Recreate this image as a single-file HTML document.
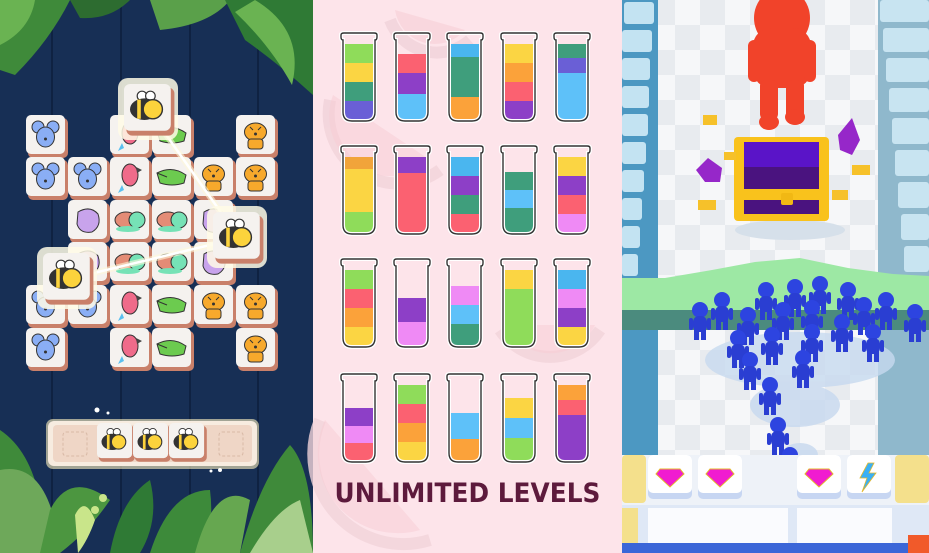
<!DOCTYPE html>
<html><head><meta charset="utf-8"><style>
html,body{margin:0;padding:0;width:929px;height:553px;overflow:hidden;background:#fff}
svg{position:absolute;top:0;left:0}
.txt{position:absolute;left:313px;width:309px;top:478px;text-align:center;font-family:"DejaVu Sans","Liberation Sans",sans-serif;font-weight:bold;font-size:27px;color:#5d1a3c;letter-spacing:0px;transform:scaleX(0.92)}
</style></head><body>
<svg width="929" height="553" viewBox="0 0 929 553">
<defs>
<clipPath id="c"><path d="M3,8 L35,8 L35,80 Q35,89 26,89 L12,89 Q3,89 3,80 Z"/></clipPath>
<path id="o" d="M3,8 Q1,8 1,5 L1,3 Q1,1 4,1 L34,1 Q37,1 37,3 L37,5 Q37,8 35,8 L35,80 Q35,89 26,89 L12,89 Q3,89 3,80 Z"/>
<g id="tile"><rect x="2" y="3" width="40" height="40" rx="5" fill="#c9806a"/><rect x="0" y="0" width="39" height="39" rx="5" fill="#f5f2ef"/></g>
<g id="mouse"><circle cx="12" cy="12" r="6" fill="#8aaef5" stroke="#333" stroke-width="1"/><circle cx="27" cy="12" r="6" fill="#8aaef5" stroke="#333" stroke-width="1"/><ellipse cx="19.5" cy="22" rx="9" ry="10" fill="#8aaef5" stroke="#333" stroke-width="1"/><circle cx="19.5" cy="24" r="1.5" fill="#333"/></g>
<g id="tiger"><ellipse cx="19.5" cy="17" rx="11" ry="9" fill="#f7a92c" stroke="#333" stroke-width="1"/><rect x="12" y="24" width="15" height="10" rx="3" fill="#f7a92c" stroke="#333" stroke-width="1"/><path d="M14,12 l3,3 M25,12 l-3,3" stroke="#333"/><circle cx="19.5" cy="19" r="1.5" fill="#333"/></g>
<g id="parrot"><ellipse cx="20" cy="18" rx="8" ry="11" fill="#ef6b8a" stroke="#333" stroke-width="1"/><path d="M26,10 l6,3 l-5,3z" fill="#444"/><path d="M12,28 l-4,8 l6,-3z" fill="#5ac0f0"/></g>
<g id="croc"><path d="M5,16 Q20,8 34,18 L32,26 Q20,30 8,26 Z" fill="#6ccb4f" stroke="#333" stroke-width="1"/><path d="M5,16 l10,4" stroke="#333"/></g>
<g id="turtle"><ellipse cx="16" cy="20" rx="11" ry="8" fill="#e48c76" stroke="#333" stroke-width="1"/><circle cx="27" cy="20" r="8" fill="#76e2b6" stroke="#333" stroke-width="1"/><ellipse cx="18" cy="29" rx="12" ry="3" fill="#76e2b6"/></g>
<g id="blob"><path d="M10,12 Q22,5 30,14 Q34,26 24,32 Q12,34 9,24 Z" fill="#c8a3ec" stroke="#333" stroke-width="1"/></g>
<g id="bee"><circle cx="15" cy="10" r="4" fill="#fff" stroke="#333"/><circle cx="22" cy="10" r="4" fill="#fff" stroke="#333"/><ellipse cx="17" cy="21" rx="12" ry="9" fill="#333"/><rect x="11" y="13" width="3" height="16" fill="#fcd33c"/><circle cx="24" cy="21" r="8" fill="#fcd33c" stroke="#333" stroke-width="1.2"/></g>
<pattern id="chk" width="50" height="50" patternUnits="userSpaceOnUse"><rect width="50" height="50" fill="#f6f7f9"/><rect width="25" height="25" fill="#e8ebef"/><rect x="25" y="25" width="25" height="25" fill="#e8ebef"/></pattern>
<g id="man"><circle cx="0" cy="0" r="8" fill="#2d44e0"/><rect x="-7" y="6" width="14" height="16" rx="6" fill="#2a3ed2"/><rect x="-11" y="8" width="4" height="12" rx="2" fill="#2a3ed2"/><rect x="7" y="8" width="4" height="12" rx="2" fill="#2a3ed2"/><rect x="-6" y="19" width="5" height="11" fill="#2a3ed2"/><rect x="1" y="19" width="5" height="11" fill="#2a3ed2"/></g>
<g id="gem"><rect x="0" y="0" width="44" height="44" rx="5" fill="#c7d6f2"/><rect x="0" y="0" width="44" height="38" rx="5" fill="#fff"/><path d="M12,14 L32,14 L36,19 L22,32 L8,19 Z" fill="#f01cd0" stroke="#e4b82a" stroke-width="1"/></g>
</defs>

<!-- LEFT PANEL -->
<rect x="0" y="0" width="313" height="553" fill="#172f55"/>
<g stroke="#0f2242" stroke-width="2"><line x1="52" y1="0" x2="52" y2="553"/><line x1="121" y1="0" x2="121" y2="553"/><line x1="190" y1="0" x2="190" y2="553"/><line x1="258" y1="0" x2="258" y2="553"/></g>
<g><path d="M0,0 L70,0 Q50,40 15,75 L0,70Z" fill="#3f8a3a"/><path d="M0,0 L35,0 Q30,30 0,45Z" fill="#6ab352"/><path d="M150,0 L230,0 Q210,25 160,30Z" fill="#5aa04a"/><path d="M225,0 L313,0 L313,95 Q280,65 245,40Z" fill="#2f7a35"/><path d="M255,0 Q305,30 292,85 Q270,45 235,12Z" fill="#6ab352"/><path d="M70,0 L130,0 Q110,20 80,18Z" fill="#2d6c30"/></g>
<g>
<use href="#tile" x="26" y="115"/><use href="#mouse" x="26" y="115"/>
<use href="#tile" x="110" y="115"/><use href="#parrot" x="110" y="115"/>
<use href="#tile" x="152" y="115"/><use href="#croc" x="152" y="115"/>
<use href="#tile" x="236" y="115"/><use href="#tiger" x="236" y="115"/>
<use href="#tile" x="26" y="157"/><use href="#mouse" x="26" y="157"/>
<use href="#tile" x="68" y="157"/><use href="#mouse" x="68" y="157"/>
<use href="#tile" x="110" y="157"/><use href="#parrot" x="110" y="157"/>
<use href="#tile" x="152" y="157"/><use href="#croc" x="152" y="157"/>
<use href="#tile" x="194" y="157"/><use href="#tiger" x="194" y="157"/>
<use href="#tile" x="236" y="157"/><use href="#tiger" x="236" y="157"/>
<use href="#tile" x="68" y="200"/><use href="#blob" x="68" y="200"/>
<use href="#tile" x="110" y="200"/><use href="#turtle" x="110" y="200"/>
<use href="#tile" x="152" y="200"/><use href="#turtle" x="152" y="200"/>
<use href="#tile" x="194" y="200"/><use href="#blob" x="194" y="200"/>
<use href="#tile" x="68" y="242"/><use href="#blob" x="68" y="242"/>
<use href="#tile" x="110" y="242"/><use href="#turtle" x="110" y="242"/>
<use href="#tile" x="152" y="242"/><use href="#turtle" x="152" y="242"/>
<use href="#tile" x="194" y="242"/><use href="#blob" x="194" y="242"/>
<use href="#tile" x="26" y="285"/><use href="#mouse" x="26" y="285"/>
<use href="#tile" x="68" y="285"/><use href="#mouse" x="68" y="285"/>
<use href="#tile" x="110" y="285"/><use href="#parrot" x="110" y="285"/>
<use href="#tile" x="152" y="285"/><use href="#croc" x="152" y="285"/>
<use href="#tile" x="194" y="285"/><use href="#tiger" x="194" y="285"/>
<use href="#tile" x="236" y="285"/><use href="#tiger" x="236" y="285"/>
<use href="#tile" x="26" y="328"/><use href="#mouse" x="26" y="328"/>
<use href="#tile" x="110" y="328"/><use href="#parrot" x="110" y="328"/>
<use href="#tile" x="152" y="328"/><use href="#croc" x="152" y="328"/>
<use href="#tile" x="236" y="328"/><use href="#tiger" x="236" y="328"/>
</g>
<g stroke-linecap="round"><path d="M150,112 L239,238 L69,279" fill="none" stroke="#fff8d8" stroke-width="6" opacity="0.6"/><path d="M150,112 L239,238 L69,279" fill="none" stroke="#fff" stroke-width="2.5"/></g>
<g>
<rect x="118" y="78" width="60" height="62" rx="10" fill="#fffbe6" opacity="0.85"/>
<use href="#tile" transform="translate(124,84) scale(1.2)"/><use href="#bee" transform="translate(124,84) scale(1.2)"/>
<rect x="207" y="206" width="60" height="62" rx="10" fill="#fffbe6" opacity="0.85"/>
<use href="#tile" transform="translate(213,212) scale(1.2)"/><use href="#bee" transform="translate(213,212) scale(1.2)"/>
<rect x="37" y="247" width="60" height="62" rx="10" fill="#fffbe6" opacity="0.85"/>
<use href="#tile" transform="translate(43,253) scale(1.2)"/><use href="#bee" transform="translate(43,253) scale(1.2)"/>
</g>
<rect x="46" y="419" width="213" height="50" rx="7" fill="#fff3c0" opacity="0.6"/>
<rect x="48" y="421" width="209" height="45" rx="6" fill="#f7ece0"/>
<rect x="53" y="425" width="199" height="37" rx="4" fill="#efd6c6"/>
<rect x="63" y="432" width="24" height="24" rx="3" fill="none" stroke="#d8b9a6" stroke-dasharray="3,2"/>
<rect x="219" y="432" width="24" height="24" rx="3" fill="none" stroke="#d8b9a6" stroke-dasharray="3,2"/>
<g transform="translate(97,423) scale(0.9)"><use href="#tile"/><use href="#bee"/></g>
<g transform="translate(133,423) scale(0.9)"><use href="#tile"/><use href="#bee"/></g>
<g transform="translate(169,423) scale(0.9)"><use href="#tile"/><use href="#bee"/></g>
<g fill="#fff"><circle cx="97" cy="410" r="2.5"/><circle cx="108" cy="413" r="1.5"/><circle cx="220" cy="470" r="2"/><circle cx="211" cy="471" r="1.5"/></g>
<g>
<path d="M0,430 Q30,450 40,500 L40,553 L0,553Z" fill="#3f8a3a"/>
<path d="M0,470 Q50,460 60,553 L0,553Z" fill="#6ea85a"/>
<path d="M50,510 Q70,470 110,500 Q90,530 60,553 L40,553Z" fill="#4c9640"/>
<path d="M110,553 Q120,500 150,480 Q160,520 140,553Z" fill="#2f7a35"/>
<path d="M150,553 Q170,490 210,490 Q215,530 200,553Z" fill="#3d8a3a"/>
<path d="M195,553 Q215,480 250,500 L240,553Z" fill="#66a750"/>
<path d="M240,553 Q260,480 290,445 Q313,470 313,553Z" fill="#3f8a3a"/>
<path d="M250,553 Q275,510 300,500 L313,553Z" fill="#a8cf8c"/>
<path d="M75,515 Q85,495 95,520 Q88,540 78,553Z" fill="#c9e58a"/>
<circle cx="103" cy="498" r="4" fill="#c9e58a"/><circle cx="95" cy="510" r="4" fill="#c9e58a"/>
</g>

<!-- MIDDLE PANEL -->
<rect x="313" y="0" width="309" height="553" fill="#fde4ea"/>
<g fill="none" stroke="#f1d3da" stroke-width="12" opacity="0.8">
<path d="M330,100 A70,70 0 0 0 440,170"/><path d="M390,20 A50,50 0 0 0 470,40"/><path d="M320,420 A90,90 0 0 0 430,540"/><path d="M500,330 A60,60 0 0 0 600,330"/>
</g>
<g fill="#f7ccd3" opacity="0.5"><path d="M395,10 A40,40 0 0 0 465,30 Z"/><path d="M333,95 A60,60 0 0 0 430,160 Z"/><path d="M325,420 A80,80 0 0 0 420,530 Z"/><path d="M505,325 A50,50 0 0 0 595,325Z"/></g>
<g>
<g transform="translate(340,32)"><g clip-path="url(#c)"><rect y="12" width="38" height="90" fill="#8fdc5a"/><rect y="31" width="38" height="90" fill="#fbd543"/><rect y="50" width="38" height="90" fill="#3f9e7c"/><rect y="69" width="38" height="90" fill="#6a5fd6"/></g><use href="#o" fill="none" stroke="#fff" stroke-width="4"/><use href="#o" fill="none" stroke="#333" stroke-width="1.4"/></g>
<g transform="translate(393,32)"><g clip-path="url(#c)"><rect y="22" width="38" height="90" fill="#fb6171"/><rect y="41" width="38" height="90" fill="#8d3fc7"/><rect y="62" width="38" height="90" fill="#5ec1f9"/></g><use href="#o" fill="none" stroke="#fff" stroke-width="4"/><use href="#o" fill="none" stroke="#333" stroke-width="1.4"/></g>
<g transform="translate(446,32)"><g clip-path="url(#c)"><rect y="12" width="38" height="90" fill="#4ab6ef"/><rect y="25" width="38" height="90" fill="#3f9e7c"/><rect y="65" width="38" height="90" fill="#fba23a"/></g><use href="#o" fill="none" stroke="#fff" stroke-width="4"/><use href="#o" fill="none" stroke="#333" stroke-width="1.4"/></g>
<g transform="translate(500,32)"><g clip-path="url(#c)"><rect y="12" width="38" height="90" fill="#fbd543"/><rect y="31" width="38" height="90" fill="#fba23a"/><rect y="50" width="38" height="90" fill="#fb6171"/><rect y="69" width="38" height="90" fill="#8d3fc7"/></g><use href="#o" fill="none" stroke="#fff" stroke-width="4"/><use href="#o" fill="none" stroke="#333" stroke-width="1.4"/></g>
<g transform="translate(553,32)"><g clip-path="url(#c)"><rect y="12" width="38" height="90" fill="#3f9e7c"/><rect y="26" width="38" height="90" fill="#6a5fd6"/><rect y="41" width="38" height="90" fill="#5ec1f9"/></g><use href="#o" fill="none" stroke="#fff" stroke-width="4"/><use href="#o" fill="none" stroke="#333" stroke-width="1.4"/></g>

<g transform="translate(340,145)"><g clip-path="url(#c)"><rect y="12" width="38" height="90" fill="#f1a43a"/><rect y="24" width="38" height="90" fill="#fbd543"/><rect y="67" width="38" height="90" fill="#8fdc5a"/></g><use href="#o" fill="none" stroke="#fff" stroke-width="4"/><use href="#o" fill="none" stroke="#333" stroke-width="1.4"/></g>
<g transform="translate(393,145)"><g clip-path="url(#c)"><rect y="12" width="38" height="90" fill="#8d3fc7"/><rect y="28" width="38" height="90" fill="#fb6171"/></g><use href="#o" fill="none" stroke="#fff" stroke-width="4"/><use href="#o" fill="none" stroke="#333" stroke-width="1.4"/></g>
<g transform="translate(446,145)"><g clip-path="url(#c)"><rect y="12" width="38" height="90" fill="#4ab6ef"/><rect y="31" width="38" height="90" fill="#8d3fc7"/><rect y="50" width="38" height="90" fill="#3f9e7c"/><rect y="69" width="38" height="90" fill="#fb6171"/></g><use href="#o" fill="none" stroke="#fff" stroke-width="4"/><use href="#o" fill="none" stroke="#333" stroke-width="1.4"/></g>
<g transform="translate(500,145)"><g clip-path="url(#c)"><rect y="27" width="38" height="90" fill="#3f9e7c"/><rect y="45" width="38" height="90" fill="#5ec1f9"/><rect y="63" width="38" height="90" fill="#3f9e7c"/></g><use href="#o" fill="none" stroke="#fff" stroke-width="4"/><use href="#o" fill="none" stroke="#333" stroke-width="1.4"/></g>
<g transform="translate(553,145)"><g clip-path="url(#c)"><rect y="12" width="38" height="90" fill="#fbd543"/><rect y="31" width="38" height="90" fill="#8d3fc7"/><rect y="50" width="38" height="90" fill="#fb6171"/><rect y="69" width="38" height="90" fill="#ef8af5"/></g><use href="#o" fill="none" stroke="#fff" stroke-width="4"/><use href="#o" fill="none" stroke="#333" stroke-width="1.4"/></g>

<g transform="translate(340,258)"><g clip-path="url(#c)"><rect y="12" width="38" height="90" fill="#8fdc5a"/><rect y="31" width="38" height="90" fill="#fb6171"/><rect y="50" width="38" height="90" fill="#fba23a"/><rect y="69" width="38" height="90" fill="#fbd543"/></g><use href="#o" fill="none" stroke="#fff" stroke-width="4"/><use href="#o" fill="none" stroke="#333" stroke-width="1.4"/></g>
<g transform="translate(393,258)"><g clip-path="url(#c)"><rect y="40" width="38" height="90" fill="#8d3fc7"/><rect y="64" width="38" height="90" fill="#ef8af5"/></g><use href="#o" fill="none" stroke="#fff" stroke-width="4"/><use href="#o" fill="none" stroke="#333" stroke-width="1.4"/></g>
<g transform="translate(446,258)"><g clip-path="url(#c)"><rect y="28" width="38" height="90" fill="#ef8af5"/><rect y="47" width="38" height="90" fill="#5ec1f9"/><rect y="66" width="38" height="90" fill="#3f9e7c"/></g><use href="#o" fill="none" stroke="#fff" stroke-width="4"/><use href="#o" fill="none" stroke="#333" stroke-width="1.4"/></g>
<g transform="translate(500,258)"><g clip-path="url(#c)"><rect y="12" width="38" height="90" fill="#fbd543"/><rect y="31" width="38" height="90" fill="#8fdc5a"/></g><use href="#o" fill="none" stroke="#fff" stroke-width="4"/><use href="#o" fill="none" stroke="#333" stroke-width="1.4"/></g>
<g transform="translate(553,258)"><g clip-path="url(#c)"><rect y="12" width="38" height="90" fill="#4ab6ef"/><rect y="31" width="38" height="90" fill="#ef8af5"/><rect y="50" width="38" height="90" fill="#8d3fc7"/><rect y="69" width="38" height="90" fill="#fbd543"/></g><use href="#o" fill="none" stroke="#fff" stroke-width="4"/><use href="#o" fill="none" stroke="#333" stroke-width="1.4"/></g>

<g transform="translate(340,373)"><g clip-path="url(#c)"><rect y="35" width="38" height="90" fill="#8d3fc7"/><rect y="53" width="38" height="90" fill="#ef8af5"/><rect y="70" width="38" height="90" fill="#fb6171"/></g><use href="#o" fill="none" stroke="#fff" stroke-width="4"/><use href="#o" fill="none" stroke="#333" stroke-width="1.4"/></g>
<g transform="translate(393,373)"><g clip-path="url(#c)"><rect y="12" width="38" height="90" fill="#8fdc5a"/><rect y="31" width="38" height="90" fill="#fb6171"/><rect y="50" width="38" height="90" fill="#fba23a"/><rect y="69" width="38" height="90" fill="#fbd543"/></g><use href="#o" fill="none" stroke="#fff" stroke-width="4"/><use href="#o" fill="none" stroke="#333" stroke-width="1.4"/></g>
<g transform="translate(446,373)"><g clip-path="url(#c)"><rect y="40" width="38" height="90" fill="#5ec1f9"/><rect y="66" width="38" height="90" fill="#fba23a"/></g><use href="#o" fill="none" stroke="#fff" stroke-width="4"/><use href="#o" fill="none" stroke="#333" stroke-width="1.4"/></g>
<g transform="translate(500,373)"><g clip-path="url(#c)"><rect y="25" width="38" height="90" fill="#fbd543"/><rect y="45" width="38" height="90" fill="#5ec1f9"/><rect y="65" width="38" height="90" fill="#8fdc5a"/></g><use href="#o" fill="none" stroke="#fff" stroke-width="4"/><use href="#o" fill="none" stroke="#333" stroke-width="1.4"/></g>
<g transform="translate(553,373)"><g clip-path="url(#c)"><rect y="12" width="38" height="90" fill="#fba23a"/><rect y="27" width="38" height="90" fill="#fb6171"/><rect y="42" width="38" height="90" fill="#8d3fc7"/></g><use href="#o" fill="none" stroke="#fff" stroke-width="4"/><use href="#o" fill="none" stroke="#333" stroke-width="1.4"/></g>
</g>

<!-- RIGHT PANEL -->
<rect x="622" y="0" width="307" height="553" fill="url(#chk)"/>
<g>
<rect x="622" y="0" width="36" height="460" fill="#4c98c2"/>
<g fill="#c3e3f2">
<rect x="624" y="2" width="30" height="22" rx="3"/><rect x="622" y="30" width="30" height="22" rx="3"/><rect x="622" y="58" width="28" height="22" rx="3"/><rect x="622" y="86" width="27" height="22" rx="3"/><rect x="622" y="114" width="26" height="22" rx="3"/><rect x="622" y="142" width="24" height="22" rx="3"/><rect x="622" y="170" width="22" height="22" rx="3"/><rect x="622" y="198" width="20" height="22" rx="3"/><rect x="622" y="226" width="18" height="22" rx="3"/><rect x="622" y="254" width="16" height="22" rx="3"/>
</g>
<rect x="878" y="0" width="51" height="460" fill="#8fb8cc"/>
<g fill="#c8e4f1">
<rect x="880" y="0" width="49" height="22" rx="3"/><rect x="883" y="28" width="46" height="24" rx="3"/><rect x="886" y="58" width="43" height="24" rx="3"/><rect x="889" y="88" width="40" height="24" rx="3"/><rect x="892" y="118" width="37" height="26" rx="3"/><rect x="895" y="150" width="34" height="26" rx="3"/><rect x="898" y="182" width="31" height="26" rx="3"/><rect x="901" y="214" width="28" height="26" rx="3"/><rect x="904" y="246" width="25" height="26" rx="3"/>
</g>
</g>
<g fill="#f1432a">
<ellipse cx="782" cy="18" rx="28" ry="30"/>
<rect x="753" y="28" width="58" height="60" rx="18"/>
<rect x="748" y="40" width="12" height="42" rx="6"/><rect x="804" y="40" width="12" height="42" rx="6"/>
<rect x="760" y="80" width="18" height="40" rx="6"/><rect x="786" y="80" width="18" height="40" rx="6"/>
<ellipse cx="769" cy="122" rx="10" ry="8"/><ellipse cx="795" cy="117" rx="10" ry="8"/>
</g>
<ellipse cx="790" cy="230" rx="55" ry="10" fill="#d6e0ea"/>
<rect x="734" y="137" width="95" height="84" rx="4" fill="#f9c21c"/>
<rect x="744" y="142" width="75" height="25" fill="#5a14c8"/>
<rect x="744" y="167" width="75" height="22" fill="#4a137f"/>
<rect x="744" y="200" width="75" height="14" fill="#4a137f"/>
<rect x="781" y="193" width="12" height="12" rx="2" fill="#f1b814"/>
<g fill="#9627c9"><path d="M696,170 L708,158 L722,168 L720,182 L705,182Z"/><path d="M838,135 L852,118 L860,140 L852,155 L840,150Z"/></g>
<g fill="#f6c12a"><rect x="703" y="115" width="14" height="10"/><rect x="698" y="200" width="18" height="10"/><rect x="852" y="165" width="18" height="10"/><rect x="832" y="190" width="16" height="10"/><rect x="724" y="152" width="12" height="8"/></g>
<path d="M622,278 L665,278 L712,270 L755,262 L800,258 L848,268 L893,274 L929,276 L929,330 L622,330 Z" fill="#9de8a4"/>
<path d="M622,310 L929,310 L929,330 L622,330Z" fill="#4b8b7e"/>
<g fill="#c7d9ef" opacity="0.8"><ellipse cx="800" cy="360" rx="95" ry="28"/><ellipse cx="795" cy="405" rx="45" ry="22"/><ellipse cx="800" cy="455" rx="18" ry="12"/></g>
<g>
<use href="#man" x="700" y="310"/><use href="#man" x="722" y="300"/><use href="#man" x="766" y="290"/><use href="#man" x="795" y="287"/><use href="#man" x="820" y="284"/><use href="#man" x="848" y="290"/><use href="#man" x="886" y="300"/><use href="#man" x="915" y="312"/>
<use href="#man" x="748" y="315"/><use href="#man" x="783" y="310"/><use href="#man" x="812" y="308"/><use href="#man" x="864" y="305"/>
<use href="#man" x="738" y="338"/><use href="#man" x="772" y="335"/><use href="#man" x="812" y="332"/><use href="#man" x="842" y="322"/><use href="#man" x="873" y="332"/><use href="#man" x="750" y="360"/>
<use href="#man" x="803" y="358"/><use href="#man" x="770" y="385"/><use href="#man" x="778" y="425"/><use href="#man" x="790" y="455"/>
</g>
<rect x="622" y="455" width="307" height="98" fill="#eef2f8"/>
<rect x="622" y="455" width="24" height="48" rx="4" fill="#f4e08c"/>
<use href="#gem" x="648" y="455"/><use href="#gem" x="698" y="455"/>
<use href="#gem" x="797" y="455"/>
<rect x="847" y="455" width="44" height="44" rx="5" fill="#c7d6f2"/><rect x="847" y="455" width="44" height="38" rx="5" fill="#fff"/>
<path d="M868,463 L860,478 L867,478 L862,492 L876,473 L869,473 L874,463Z" fill="#3ab0f5" stroke="#e4b82a" stroke-width="0.8"/>
<rect x="895" y="455" width="34" height="48" rx="4" fill="#f4e08c"/>
<rect x="622" y="505" width="307" height="48" fill="#dfe8f6"/>
<rect x="622" y="508" width="16" height="45" fill="#f4e08c"/>
<rect x="648" y="508" width="140" height="45" fill="#fafbfe"/>
<rect x="797" y="508" width="95" height="45" fill="#fafbfe"/>
<rect x="622" y="543" width="307" height="10" fill="#3b66d8"/>
<rect x="908" y="535" width="21" height="18" fill="#f15a2a"/>
</svg>
<div class="txt">UNLIMITED LEVELS</div>
</body></html>
